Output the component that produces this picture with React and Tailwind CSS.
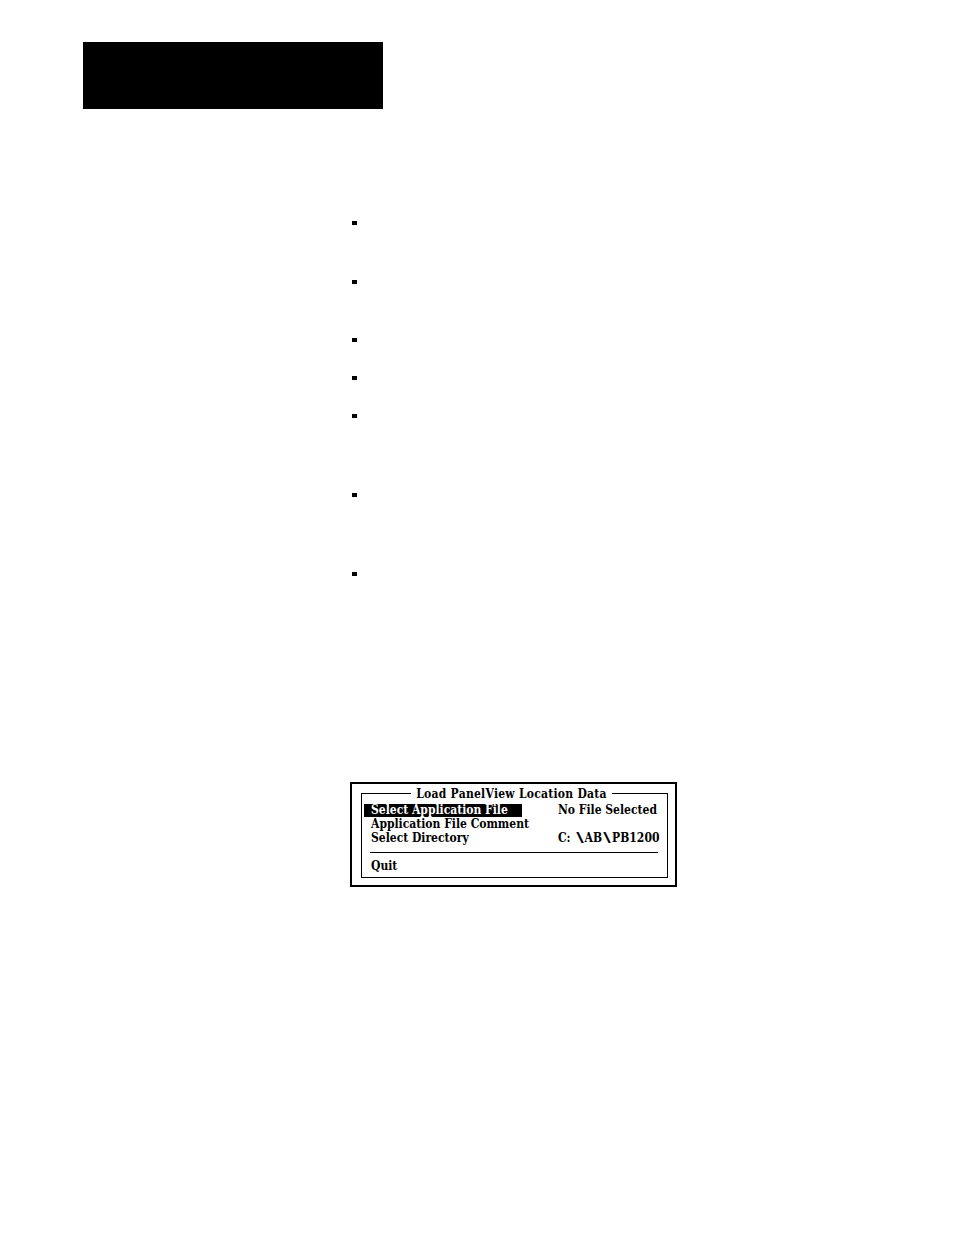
import React from "react";

const font = { fontFamily: '"DejaVu Serif Condensed", "DejaVu Serif", "Liberation Serif", serif', fontStretch: "condensed" };

function Slash() {
  return <span className="inline-block w-[10px] text-center scale-x-[1.9]">\</span>;
}

export default function App() {
  const bulletMargins = ["mt-[112px]", "mt-[55px]", "mt-[54px]", "mt-[34px]", "mt-[34px]", "mt-[75px]", "mt-[75px]"];
  return (
    <div className="w-[954px] h-[1235px] bg-white flex flex-col" style={font}>
      <div className="ml-[83px] mt-[42px] w-[300px] h-[67px] bg-black" />
      <ul className="ml-[352px] flex flex-col">
        {bulletMargins.map((m, i) => (
          <li key={i} className={`w-[5px] h-[4px] bg-black ${m}`} />
        ))}
      </ul>
      <div className="ml-[350px] mt-[206px] w-[327px] h-[105px] border-2 border-black">
        <div className="relative ml-[9px] mt-[9px] w-[307px] h-[85px] border border-black">
          <div className="absolute left-0 right-0 -top-[7px] flex justify-center">
            <span className="bg-white px-[5px] text-[12px] leading-[14px] font-bold tracking-[0.25px] text-black ml-[-6px]">
              Load PanelView Location Data
            </span>
          </div>
          <div className="pt-[9px] text-[12px] leading-[14px] font-bold text-black">
            <div className="flex items-center h-[14px]">
              <div className="ml-[2px] w-[158px] h-[13px] bg-black text-white pl-[7px] flex items-center whitespace-nowrap">
                Select Application File
              </div>
              <div className="ml-[36px] whitespace-nowrap">No File Selected</div>
            </div>
            <div className="flex items-center h-[14px] pl-[9px] whitespace-nowrap">Application File Comment</div>
            <div className="flex items-center h-[14px] whitespace-nowrap">
              <div className="pl-[9px] w-[196px]">Select Directory</div>
              <div className="flex items-center">
                <span>C:</span>
                <span className="ml-[4px]"><Slash /></span>
                <span>AB</span>
                <Slash />
                <span>PB1200</span>
              </div>
            </div>
            <div className="ml-[8px] mt-[7px] w-[288px] h-px bg-black" />
            <div className="pl-[9px] mt-[6px] h-[14px] flex items-center">Quit</div>
          </div>
        </div>
      </div>
    </div>
  );
}
